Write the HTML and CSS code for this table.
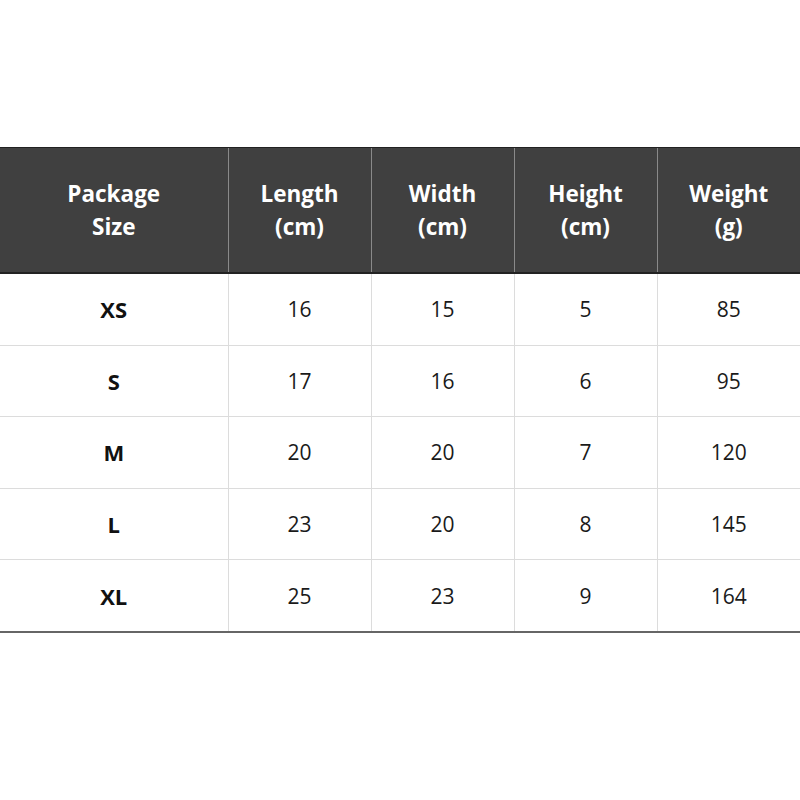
FILE: index.html
```html
<!DOCTYPE html>
<html>
<head>
<meta charset="utf-8">
<link rel="stylesheet" href="styles.css">
</head>
<body>
<div class="page">
<table class="size-table">
<colgroup>
<col class="c-first"><col class="c-n"><col class="c-n"><col class="c-n"><col class="c-n">
</colgroup>
<thead>
<tr>
<th>Package<br>Size</th>
<th>Length<br>(cm)</th>
<th>Width<br>(cm)</th>
<th>Height<br>(cm)</th>
<th>Weight<br>(g)</th>
</tr>
</thead>
<tbody>
<tr><td class="sz">XS</td><td>16</td><td>15</td><td>5</td><td>85</td></tr>
<tr><td class="sz">S</td><td>17</td><td>16</td><td>6</td><td>95</td></tr>
<tr><td class="sz">M</td><td>20</td><td>20</td><td>7</td><td>120</td></tr>
<tr><td class="sz">L</td><td>23</td><td>20</td><td>8</td><td>145</td></tr>
<tr><td class="sz">XL</td><td>25</td><td>23</td><td>9</td><td>164</td></tr>
</tbody>
</table>
</div>
</body>
</html>
```

FILE: styles.css
```css
html, body {
  margin: 0;
  padding: 0;
  background: #fff;
}
.page {
  width: 800px;
  height: 800px;
  padding-top: 147px;
  box-sizing: border-box;
}
.size-table {
  width: 800px;
  border-collapse: collapse;
  table-layout: fixed;
  font-family: "Open Sans", "Noto Sans", sans-serif;
  color: #111;
}
.c-first { width: 228px; }
.c-n { width: 143px; }
.size-table th {
  background: #404040;
  color: #fff;
  font-weight: 700;
  font-size: 22.5px;
  line-height: 33px;
  height: 124px;
  padding: 0;
  text-align: center;
  vertical-align: middle;
  border-left: 1px solid #8a8a8a;
  border-top: 1px solid #222;
  border-bottom: 2px solid #222;
}
.size-table th:first-child { border-left: none; }
.size-table td {
  height: 70.6px;
  padding: 0;
  text-align: center;
  vertical-align: middle;
  font-size: 21px;
  color: #1a1a1a;
  border-left: 1px solid #dcdcdc;
  border-top: 1px solid #dcdcdc;
}
.size-table td:first-child { border-left: none; }
.size-table td.sz { font-weight: 700; font-size: 22px; color: #111; }
.size-table tbody tr:last-child td { border-bottom: 2px solid #666; }
```
